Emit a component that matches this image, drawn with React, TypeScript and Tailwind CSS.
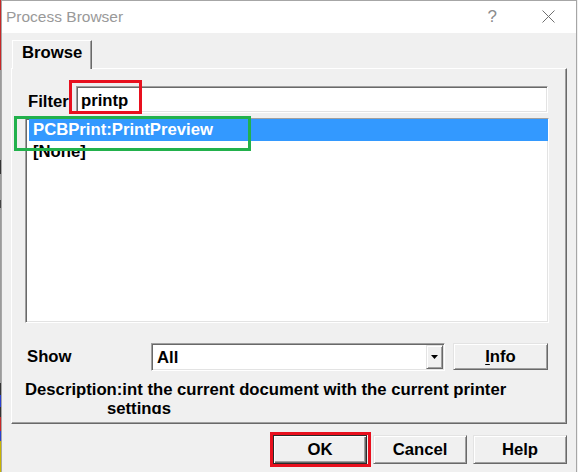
const F = "font-['Liberation_Sans',Arial,sans-serif]";

const sunken =
  "border border-t-[#a0a0a0] border-l-[#a0a0a0] border-b-white border-r-white shadow-[inset_1px_1px_0_#696969,inset_-1px_-1px_0_#e3e3e3]";
const raised =
  "border border-t-[#e3e3e3] border-l-[#e3e3e3] border-b-[#696969] border-r-[#696969] shadow-[inset_1px_1px_0_#ffffff,inset_-1px_-1px_0_#a0a0a0]";

function Btn({ children, cls = "" }: { children: React.ReactNode; cls?: string }) {
  return (
    <div
      className={`w-[94px] h-[29px] bg-[#f0f0f0] flex items-center justify-center text-[16.7px] font-bold leading-[19px] text-black ${cls}`}
    >
      {children}
    </div>
  );
}

export default function App() {
  return (
    <div className={`w-[578px] h-[472px] overflow-hidden flex bg-[#f0f0f0] ${F}`}>
      {/* strip of background behind the dialog */}
      <div className="w-px h-full flex flex-col shrink-0">
        <div className="h-[70px] bg-[#c62828]" />
        <div className="h-[90px] bg-[#9a9a9a]" />
        <div className="h-[14px] bg-[#333333]" />
        <div className="h-[26px] bg-[#9a9a9a]" />
        <div className="h-[8px] bg-[#444444]" />
        <div className="h-[175px] bg-[#9a9a9a]" />
        <div className="h-[12px] bg-[#333333]" />
        <div className="h-[12px] bg-[#2a3fcf]" />
        <div className="h-[10px] bg-[#333333]" />
        <div className="h-[14px] bg-[#c62828]" />
        <div className="h-[10px] bg-[#2a3fcf]" />
        <div className="flex-1 bg-[#c8b400]" />
      </div>

      {/* window */}
      <div className="w-[576px] shrink-0 flex flex-col border-l border-r border-t border-[#a6a6a6]">
        {/* title bar */}
        <div className="h-[32px] bg-white flex items-start shrink-0">
          <div className="pl-[4px] pt-[6px] text-[15.5px] leading-[19px] text-[#999999]">Process Browser</div>
          <div className="ml-auto flex items-start">
            <div className="pt-[6px] text-[17px] leading-[20px] text-[#8c8c8c]">?</div>
            <svg className="ml-[45px] mt-[9px] mr-[21px]" width="13" height="13" viewBox="0 0 13 13">
              <path d="M0.5 0.5 L12.5 12.5 M12.5 0.5 L0.5 12.5" stroke="#6f6f6f" strokeWidth="1" fill="none" />
            </svg>
          </div>
        </div>

        {/* body */}
        <div className="flex-1 flex flex-col px-[9px] pt-[7px]">
          {/* tab */}
          <div className="flex">
            <div className="ml-[1px] w-[80px] h-[29px] -mb-px relative z-10 bg-[#f0f0f0] border-t border-l border-white border-r border-r-[#696969] shadow-[inset_-1px_0_0_#a0a0a0] pl-[9px] pt-[2px] text-[16.7px] leading-[19px] font-bold text-black">
              Browse
            </div>
          </div>

          {/* panel */}
          <div className="w-[556px] h-[356px] relative flex flex-col border border-t-white border-l-white border-r-[#696969] border-b-[#696969] shadow-[inset_-1px_-1px_0_#a0a0a0] text-[16.7px] leading-[19px] font-bold text-black">
            {/* filter row */}
            <div className="mt-[17px] flex pl-[16px]">
              <div className="w-[48px] pt-[6px]">Filter</div>
              <div className={`w-[472px] h-[27px] bg-white pl-[4px] pt-[4px] ${sunken}`}>printp</div>
            </div>

            {/* list */}
            <div className={`mt-[5px] ml-[13px] w-[524px] h-[205px] bg-white flex flex-col ${sunken}`}>
              <div className="ml-[3px] h-[22px] leading-[22px] bg-[#3399ff] text-white pl-[4px]">PCBPrint:PrintPreview</div>
              <div className="ml-[3px] h-[22px] leading-[22px] pl-[4px]">[None]</div>
            </div>

            {/* show row */}
            <div className="mt-[20px] flex pl-[15px]">
              <div className="w-[124px] pt-[4px]">Show</div>
              <div className={`w-[294px] h-[28px] bg-white flex items-stretch ${sunken}`}>
                <div className="flex-1 flex items-center pl-[5px]">All</div>
                <div className={`w-[17px] my-[1px] mr-[1px] bg-[#f0f0f0] flex items-center justify-center ${raised}`}>
                  <svg width="7" height="4" viewBox="0 0 7 4">
                    <path d="M0 0 H7 L3.5 4 Z" fill="#000" />
                  </svg>
                </div>
              </div>
              <div className={`ml-[8px] w-[95px] h-[27px] bg-[#f0f0f0] flex items-center justify-center ${raised}`}>
                <span>
                  <span className="underline underline-offset-2">I</span>nfo
                </span>
              </div>
            </div>

            {/* description */}
            <div className="mt-[9px] h-[34px] overflow-hidden">
              <div className="pl-[13px] whitespace-nowrap">Description:int the current document with the current printer</div>
              <div className="pl-[95px]">settings</div>
            </div>

            {/* annotations */}
            <div className="absolute left-[57px] top-[11px] w-[73px] h-[34px] border-[3px] border-[#e8101e]" />
            <div className="absolute left-[2px] top-[47px] w-[237px] h-[35px] border-[3px] border-[#22b14c]" />
          </div>

          {/* buttons */}
          <div className="mt-[11px] flex justify-end gap-[6px]">
            <div className="relative">
              <Btn cls="border border-[#2b2b2b] shadow-[inset_1px_1px_0_#ffffff,inset_-1px_-1px_0_#696969,inset_-2px_-2px_0_#a0a0a0]">OK</Btn>
              <div className="absolute -left-[3px] -top-[3px] w-[101px] h-[35px] border-[3px] border-[#e8101e]" />
            </div>
            <Btn cls={raised}>Cancel</Btn>
            <Btn cls={raised}>Help</Btn>
          </div>
        </div>
      </div>
    </div>
  );
}
